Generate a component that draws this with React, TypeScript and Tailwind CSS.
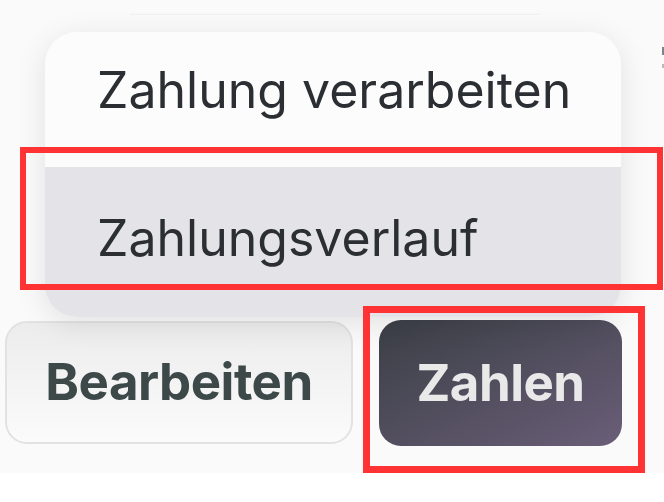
import React from "react";

const items = ["Zahlung verarbeiten", "Zahlungsverlauf"];

const App: React.FC = () => {
  return (
    <div className="w-[664px] h-[502px] bg-white overflow-hidden relative" style={{ fontFamily: "Inter, 'Noto Sans', sans-serif" }}>
      {/* page area */}
      <div className="h-[473px] bg-[#fafafa] relative">
        <div className="flex flex-row gap-[26px] pl-[5px] pt-[321px]">
          <button className="w-[348px] h-[123px] rounded-[22px] border-2 border-[#e2e2e2] bg-gradient-to-b from-[#ececec] to-[#fbfbfb] text-[51px] font-bold tracking-[-0.5px] text-[#3d4949]">
            Bearbeiten
          </button>
          <button className="w-[243px] h-[126px] -mt-[1px] rounded-[22px] bg-gradient-to-br from-[#3b3f46] to-[#6a5e78] text-[51px] font-bold tracking-[-0.5px] text-[#e9e9ea]">
            Zahlen
          </button>
        </div>

        {/* dropdown menu */}
        <div className="absolute left-[45px] top-[32px] w-[576px] h-[285px] rounded-[32px] bg-[#fcfcfc] overflow-hidden flex flex-col shadow-[0_6px_30px_rgba(0,0,0,0.10)]">
          <div className="h-[135px] flex items-center pl-[52px] pb-[18px] text-[50px] text-[#2b2f33]">
            {items[0]}
          </div>
          <div className="flex-1 flex items-center pl-[52px] pb-[8px] bg-[#e4e3e8] text-[50px] text-[#2b2f33]">
            {items[1]}
          </div>
        </div>
        <div className="absolute left-[130px] top-[14px] w-[410px] h-[1px] bg-[#f0f0f0]" />
        <div className="absolute left-[662px] top-[47px] w-[2px] h-[8px] bg-[#7d848c]" />
        <div className="absolute left-[662px] top-[64px] w-[2px] h-[4px] bg-[#b5b9be]" />
      </div>

      {/* annotation boxes */}
      <div className="absolute left-[20px] top-[147px] w-[643px] h-[143px] border-[6px] border-[#ff3333]" />
      <div className="absolute left-[363px] top-[306px] w-[282px] h-[167px] border-[7px] border-[#ff3333]" />
    </div>
  );
};

export default App;
